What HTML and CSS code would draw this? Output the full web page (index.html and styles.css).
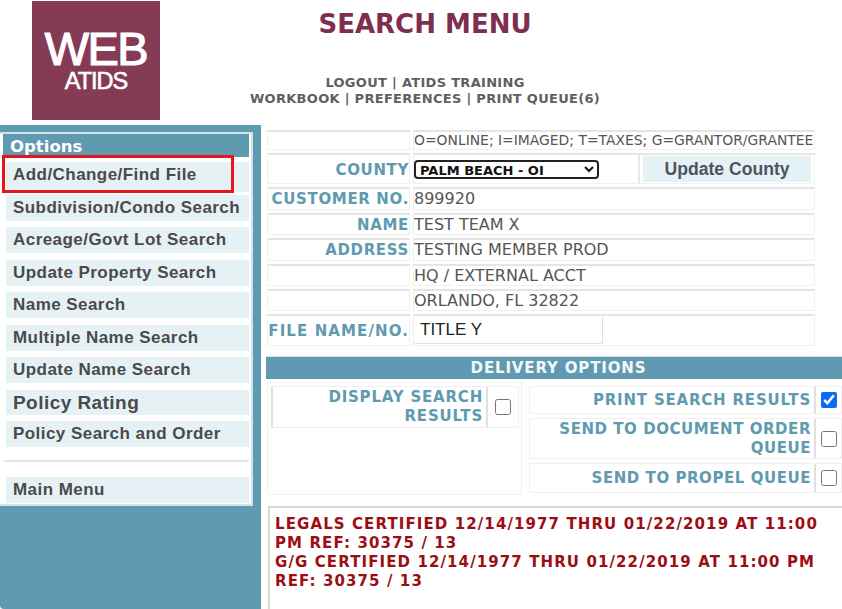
FILE: index.html
```html
<!DOCTYPE html>
<html lang="en">
<head>
  <meta charset="UTF-8" />
  <meta name="viewport" content="width=device-width, initial-scale=1.0"/>
  <title>Search Menu</title>
  <link rel="stylesheet" href="styles.css">
</head>
<body>
  <header class="top">
    <div class="logo">
      <span class="logo-web">WEB</span>
      <span class="logo-atids">ATIDS</span>
    </div>
    <div class="top-center">
      <h1>SEARCH MENU</h1>
      <nav class="top-links">
        <div><a href="#">LOGOUT</a> | <a href="#">ATIDS TRAINING</a></div>
        <div><a href="#">WORKBOOK</a> | <a href="#">PREFERENCES</a> | <a href="#">PRINT QUEUE(6)</a></div>
      </nav>
    </div>
  </header>

  <div class="page">
    <aside class="side">
      <div class="side-panel">
        <div class="side-title">Options</div>
        <a class="side-item first" href="#">Add/Change/Find File<span class="highlight"></span></a>
        <a class="side-item" href="#">Subdivision/Condo Search</a>
        <a class="side-item" href="#">Acreage/Govt Lot Search</a>
        <a class="side-item" href="#">Update Property Search</a>
        <a class="side-item" href="#">Name Search</a>
        <a class="side-item" href="#">Multiple Name Search</a>
        <a class="side-item" href="#">Update Name Search</a>
        <a class="side-item big" href="#">Policy Rating</a>
        <a class="side-item" href="#">Policy Search and Order</a>
        <div class="side-rule"></div>
        <a class="side-item" href="#">Main Menu</a>
      </div>
    </aside>

    <main class="main">
      <div class="form">
        <div class="cell"></div>
        <div class="cell small">O=ONLINE; I=IMAGED; T=TAXES; G=GRANTOR/GRANTEE</div>

        <div class="cell label tall">COUNTY</div>
        <div class="cell county">
          <select class="county-select"><option>PALM BEACH - OI</option></select>
          <div class="update-cell"><button class="update-btn">Update County</button></div>
        </div>

        <div class="cell label">CUSTOMER NO.</div>
        <div class="cell">899920</div>
        <div class="cell label">NAME</div>
        <div class="cell">TEST TEAM X</div>
        <div class="cell label">ADDRESS</div>
        <div class="cell">TESTING MEMBER PROD</div>
        <div class="cell"></div>
        <div class="cell">HQ / EXTERNAL ACCT</div>
        <div class="cell"></div>
        <div class="cell">ORLANDO, FL 32822</div>

        <div class="cell label tall wide">FILE NAME/NO.</div>
        <div class="cell file">
          <input class="file-input" type="text" value="TITLE Y">
        </div>
      </div>

      <div class="bar">DELIVERY OPTIONS</div>

      <div class="delivery">
        <div class="del-col">
          <div class="del-row left-row">
            <div class="del-label">DISPLAY SEARCH RESULTS</div>
            <div class="del-check"><input type="checkbox"></div>
          </div>
        </div>
        <div class="del-col right">
          <div class="del-row h28">
            <div class="del-label">PRINT SEARCH RESULTS</div>
            <div class="del-check"><input type="checkbox" checked></div>
          </div>
          <div class="del-row h41">
            <div class="del-label tight">SEND TO DOCUMENT ORDER QUEUE</div>
            <div class="del-check"><input type="checkbox"></div>
          </div>
          <div class="del-row h30">
            <div class="del-label tight">SEND TO PROPEL QUEUE</div>
            <div class="del-check"><input type="checkbox"></div>
          </div>
        </div>
      </div>

      <div class="notice">
        LEGALS CERTIFIED 12/14/1977 THRU 01/22/2019 AT 11:00 PM REF: 30375 / 13<br>
        G/G CERTIFIED 12/14/1977 THRU 01/22/2019 AT 11:00 PM REF: 30375 / 13
      </div>
    </main>
  </div>
</body>
</html>
```

FILE: styles.css
```css
* {
  box-sizing: border-box;
}

html, body {
  height: 100%;
}

body {
  margin: 0;
  font-family: "DejaVu Sans", Verdana, sans-serif;
  background-color: #fff;
  color: #555;
  overflow: hidden;
}

a {
  color: inherit;
  text-decoration: none;
}

.top {
  display: flex;
  height: 125px;
  padding: 1px 0 0 32px;
}

.logo {
  width: 128px;
  height: 119px;
  background: #853b55;
  color: #fff;
  font-family: "Liberation Sans", Arial, sans-serif;
  display: flex;
  flex-direction: column;
  align-items: center;
  padding-top: 28px;
}

.logo-web {
  font-size: 47px;
  line-height: 40px;
  letter-spacing: -1.6px;
  -webkit-text-stroke: 1.2px #fff;
}

.logo-atids {
  font-size: 23.5px;
  line-height: 24px;
  letter-spacing: -1px;
  -webkit-text-stroke: 0.6px #fff;
}

.top-center {
  width: 530px;
  text-align: center;
}

h1 {
  margin: 8px 0 0;
  font-size: 26px;
  line-height: 31px;
  color: #7e2e50;
}

.top-links {
  margin-top: 35px;
  font-size: 13px;
  line-height: 16px;
  font-weight: bold;
  letter-spacing: 0.3px;
  color: #5f5f5f;
}

.page {
  display: flex;
  height: 484px;
}

.side {
  width: 261px;
  flex: none;
  background: #5f9ab0;
  padding-top: 7px;
  border-bottom-left-radius: 4px;
}

.side-panel {
  width: 253px;
  height: 374px;
  background: #fff;
  border: 2px solid #cfe3ea;
  border-left: 0;
  display: flex;
  flex-direction: column;
  padding: 0 2px 0 0;
}

.side-title {
  margin-left: 3px;
  height: 23px;
  background: #5f9ab0;
  color: #fff;
  font-weight: bold;
  font-size: 16.5px;
  line-height: 25px;
  padding-left: 7px;
  overflow: hidden;
}

.side-item {
  position: relative;
  margin: 6.5px 0 0 6px;
  height: 26px;
  background: #e6f1f6;
  color: #4a4a4a;
  font-family: "Liberation Sans", Arial, sans-serif;
  font-weight: bold;
  font-size: 17px;
  line-height: 25px;
  letter-spacing: 0.45px;
  padding-left: 7px;
  flex: none;
}

.side-item.first {
  height: 30px;
  margin-top: 5px;
  margin-bottom: -4px;
  line-height: 25px;
}

.side-item.big {
  font-size: 19px;
  height: 25px;
}

.highlight {
  position: absolute;
  left: -4px;
  top: -7px;
  width: 232px;
  height: 38px;
  border: 3px solid #e8141c;
}

.side-rule {
  height: 2px;
  margin: 13px 0 8.5px 4px;
  background: #e6e6e6;
  flex: none;
}

.main {
  flex: 1;
  min-width: 0;
  padding: 5px 0 0 5px;
}

.form {
  display: grid;
  grid-template-columns: 143px 402px;
  grid-template-rows: 20px 31px 23px 22px 23px 22px 22px 32px;
  gap: 3px;
  padding-left: 1px;
}

.cell {
  border: 1px solid #f0f0f0;
  border-top: 2px solid #e4e4e4;
  font-size: 16px;
  line-height: 20px;
  color: #555;
  white-space: nowrap;
  overflow: hidden;
}

.small {
  font-size: 13.9px;
  line-height: 17px;
}

.label {
  text-align: right;
  color: #5f9ab0;
  font-weight: bold;
  font-size: 15px;
  line-height: 21px;
  letter-spacing: 0.65px;
}

.tall {
  line-height: 30px;
}

.wide {
  letter-spacing: 1.1px;
}

.county {
  display: flex;
  align-items: flex-start;
}

.county-select {
  width: 185px;
  height: 19px;
  margin-top: 5px;
  background: #fff;
  border: 2px solid #222;
  border-radius: 4px;
  font-family: "DejaVu Sans", sans-serif;
  font-size: 13px;
  font-weight: bold;
  color: #111;
}

.update-cell {
  margin-left: 39px;
  padding: 1px 0 0 3px;
  height: 28px;
  border-left: 2px solid #e8e8e8;
}

.update-btn {
  display: block;
  width: 168px;
  height: 26px;
  padding: 0;
  background: #e6f1f6;
  border: 0;
  color: #4a5560;
  font-family: "Liberation Sans", Arial, sans-serif;
  font-size: 17.6px;
  font-weight: bold;
}

.file {
  padding-top: 1px;
}

.file-input {
  display: block;
  width: 189px;
  height: 27px;
  border: 0;
  border-right: 1px solid #ddd;
  border-bottom: 1px solid #e4e4e4;
  outline: 0;
  padding: 0 0 0 6px;
  font-family: "Liberation Sans", Arial, sans-serif;
  font-size: 17px;
  color: #222;
  background: #fff;
}

.bar {
  margin-top: 10px;
  height: 23px;
  padding-left: 9px;
  background: #5f9ab0;
  color: #f4f8fa;
  text-align: center;
  font-weight: bold;
  font-size: 15px;
  line-height: 22px;
  letter-spacing: 0.85px;
  border-top: 1px solid #dde;
}

.delivery {
  display: grid;
  grid-template-columns: 255px 1fr;
  gap: 7px;
  margin: 3px 0 0 1px;
  height: 113px;
}

.del-col {
  border: 1px solid #f0f0f0;
  padding: 3px;
}

.del-col.right {
  border: 0;
  padding: 4px 0 0 0;
  display: flex;
  flex-direction: column;
  gap: 4px;
}

.del-row {
  display: flex;
  border: 1px solid #f0f0f0;
}

.left-row {
  height: 42px;
  margin-right: -1px;
  border-left: 2px solid #e0e0e0;
}

.h28 {
  height: 28px;
}

.h30 {
  height: 30px;
}

.h41 {
  height: 41px;
}

.del-label {
  flex: 1;
  display: flex;
  align-items: center;
  justify-content: flex-end;
  text-align: right;
  color: #5f9ab0;
  font-weight: bold;
  font-size: 15px;
  line-height: 19px;
  letter-spacing: 0.8px;
  padding: 0 3px 0 20px;
  border-right: 2px solid #e0e0e0;
}

.del-label.tight {
  letter-spacing: 0.55px;
}

.del-check {
  width: 30px;
  flex: none;
  display: flex;
  justify-content: center;
  align-items: center;
}

.right .del-check {
  width: 25px;
}

.del-check input {
  width: 16px;
  height: 16px;
  margin: 0;
  accent-color: #0b6cf0;
}

.notice {
  margin: 11px 0 0 2px;
  height: 110px;
  border: 2px solid #d8d8d8;
  border-right: 0;
  padding: 7px 5px;
  color: #9b0e14;
  font-weight: bold;
  font-size: 15px;
  line-height: 19px;
  letter-spacing: 1.1px;
}
```
